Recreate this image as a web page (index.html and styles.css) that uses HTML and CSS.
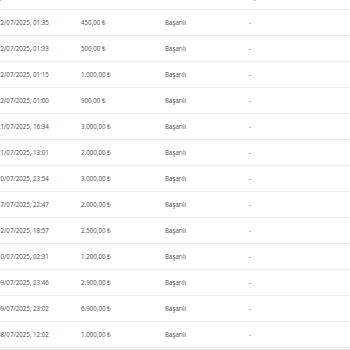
FILE: index.html
```html
<!DOCTYPE html>
<html lang="tr">
<head>
<meta charset="utf-8">
<link rel="stylesheet" href="styles.css">
</head>
<body>
<div class="table">
  <div class="row head"><span>İşlem Tarihi</span><span>Tutar</span><span>Durum</span><span>Açıklama</span></div>
  <div class="row"><span>22/07/2025, 01:35</span><span>450,00 ₺</span><span>Başarılı</span><span>-</span></div>
  <div class="row"><span>22/07/2025, 01:33</span><span>500,00 ₺</span><span>Başarılı</span><span>-</span></div>
  <div class="row"><span>22/07/2025, 01:15</span><span>1.000,00 ₺</span><span>Başarılı</span><span>-</span></div>
  <div class="row"><span>22/07/2025, 01:00</span><span>900,00 ₺</span><span>Başarılı</span><span>-</span></div>
  <div class="row"><span>21/07/2025, 16:34</span><span>3.000,00 ₺</span><span>Başarılı</span><span>-</span></div>
  <div class="row"><span>21/07/2025, 13:01</span><span>2.000,00 ₺</span><span>Başarılı</span><span>-</span></div>
  <div class="row"><span>20/07/2025, 23:54</span><span>3.000,00 ₺</span><span>Başarılı</span><span>-</span></div>
  <div class="row"><span>17/07/2025, 22:47</span><span>2.000,00 ₺</span><span>Başarılı</span><span>-</span></div>
  <div class="row"><span>12/07/2025, 18:57</span><span>2.500,00 ₺</span><span>Başarılı</span><span>-</span></div>
  <div class="row"><span>10/07/2025, 02:31</span><span>1.200,00 ₺</span><span>Başarılı</span><span>-</span></div>
  <div class="row"><span>09/07/2025, 23:46</span><span>2.900,00 ₺</span><span>Başarılı</span><span>-</span></div>
  <div class="row"><span>09/07/2025, 23:02</span><span>6.900,00 ₺</span><span>Başarılı</span><span>-</span></div>
  <div class="row"><span>08/07/2025, 12:02</span><span>1.000,00 ₺</span><span>Başarılı</span><span>-</span></div>
  <div class="footer"></div>
</div>
</body>
</html>
```
FILE: styles.css
```css
html, body {
  margin: 0;
  padding: 0;
  background: #ffffff;
  overflow: hidden;
}
.table {
  margin-top: -16px;
  margin-left: -3px;
  width: 360px;
  font-family: "Open Sans", "Noto Sans", sans-serif;
  font-size: 6.2px;
  color: #4d4d4d;
}
.row {
  display: grid;
  grid-template-columns: 84px 84px 84px 108px;
  align-items: center;
  height: 25px;
  border-bottom: 1px solid #ececec;
}
.row.head {
  color: #888888;
  font-weight: 600;
}
.footer {
  height: 20px;
  background: #f2f2f2;
}
```
